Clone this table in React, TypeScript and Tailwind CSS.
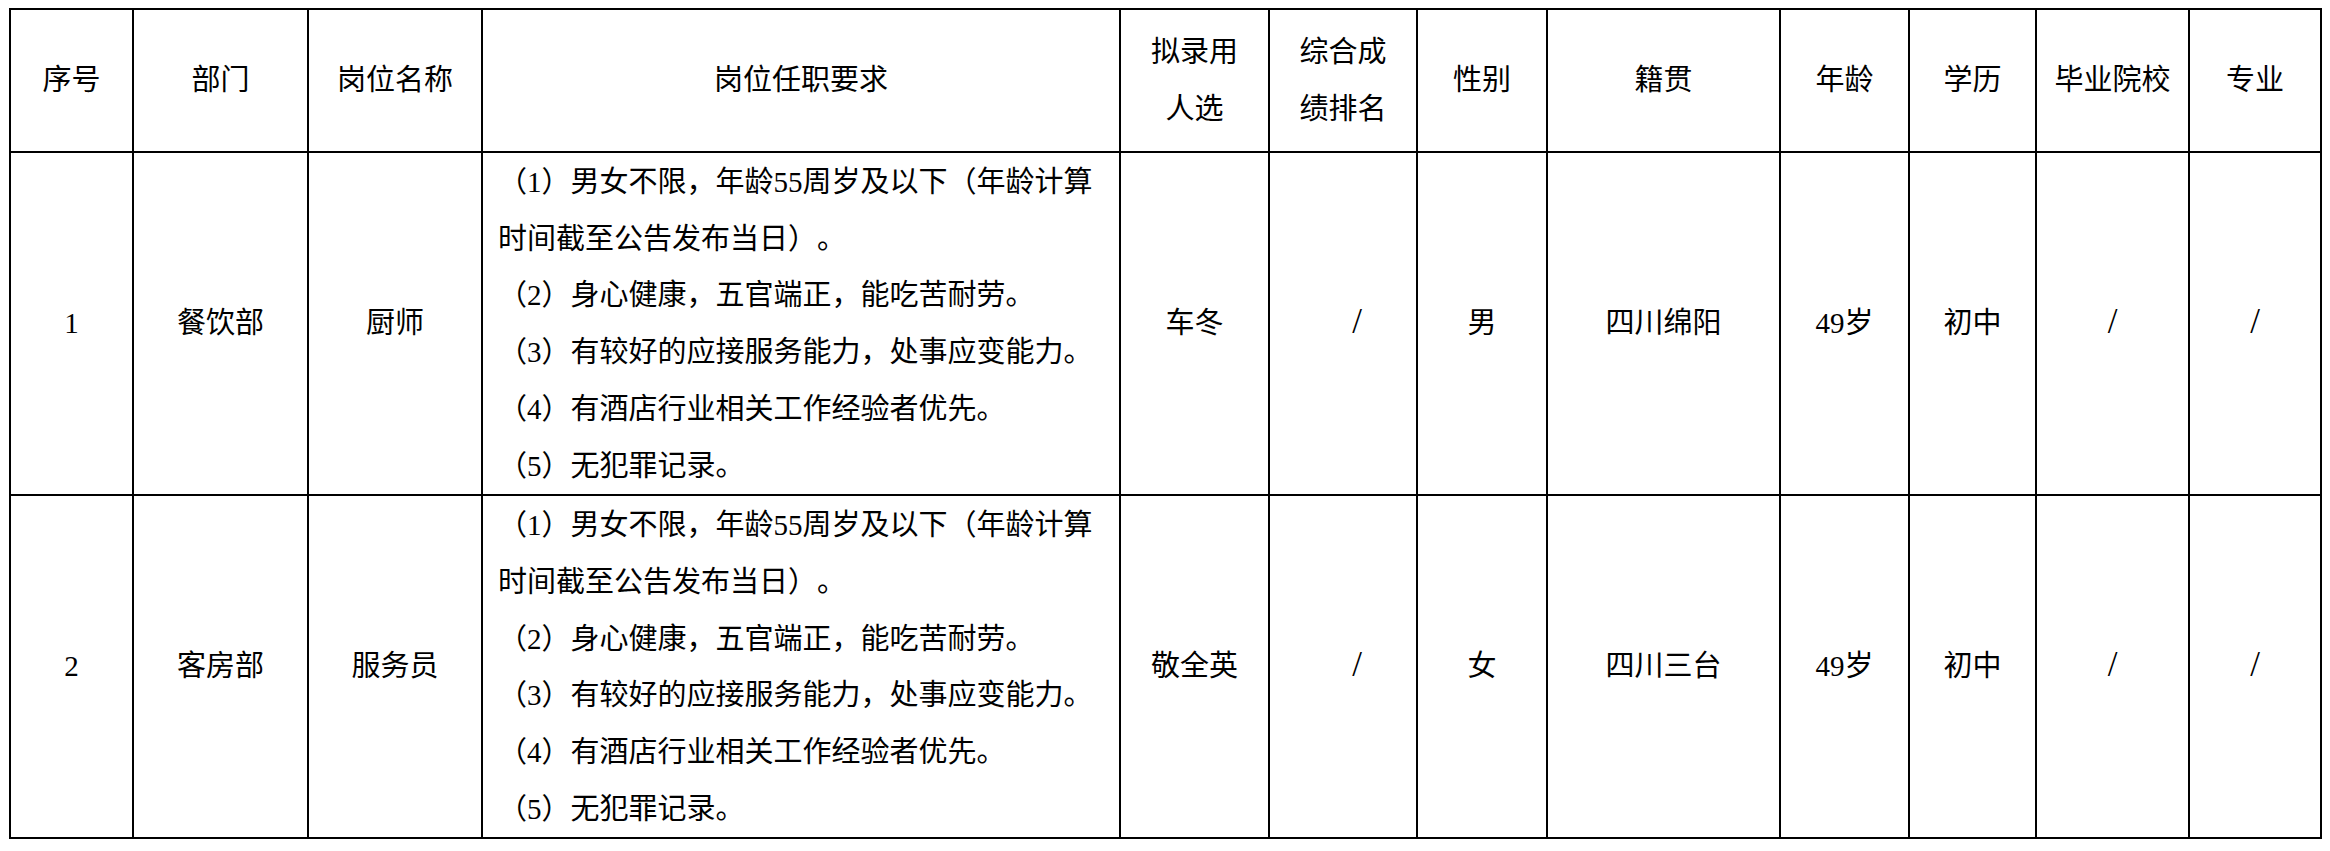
const FONT = "font-['Liberation_Serif','Noto_Sans_CJK_SC',serif]";

// column widths measured between grid lines
const COLS = [123, 175, 174, 638, 149, 148, 130, 233, 129, 127, 153, 132];

const REQUIREMENTS = [
    <>（1）男女不限，年龄55周岁及以下（年龄计算<br />时间截至公告发布当日）。</>,
    <>（2）身心健康，五官端正，能吃苦耐劳。</>,
    <>（3）有较好的应接服务能力，处事应变能力。</>,
    <>（4）有酒店行业相关工作经验者优先。</>,
    <>（5）无犯罪记录。</>,
];

type Person = {
    no: string;
    dept: string;
    post: string;
    name: string;
    gender: string;
    origin: string;
    age: string;
    edu: string;
};

const ROWS: Person[] = [
    { no: "1", dept: "餐饮部", post: "厨师", name: "车冬", gender: "男", origin: "四川绵阳", age: "49岁", edu: "初中" },
    { no: "2", dept: "客房部", post: "服务员", name: "敬全英", gender: "女", origin: "四川三台", age: "49岁", edu: "初中" },
];

const cell = "border-2 border-black text-center align-middle p-0";

function HeadCell({ children }: { children: React.ReactNode }) {
    return <th className={`${cell} h-[143px] font-normal`}>{children}</th>;
}

function Slash({ className = "" }: { className?: string }) {
    return <span className={`inline-block text-[35px] leading-[40px] ${className}`}>/</span>;
}

export default function App() {
    return (
        <div
            className={`min-h-screen bg-white pl-[9px] pt-[8px] text-black text-[29px] leading-[56.7px] [text-spacing-trim:space-all] ${FONT}`}
        >
            <table className="table-fixed border-collapse w-[2313px]">
                <colgroup>
                    {COLS.map((w, i) => (
                        <col key={i} style={{ width: w }} />
                    ))}
                </colgroup>
                <thead>
                    <tr>
                        <HeadCell>序号</HeadCell>
                        <HeadCell>部门</HeadCell>
                        <HeadCell>岗位名称</HeadCell>
                        <HeadCell>岗位任职要求</HeadCell>
                        <HeadCell>
                            拟录用
                            <br />
                            人选
                        </HeadCell>
                        <HeadCell>
                            综合成
                            <br />
                            绩排名
                        </HeadCell>
                        <HeadCell>性别</HeadCell>
                        <HeadCell>籍贯</HeadCell>
                        <HeadCell>年龄</HeadCell>
                        <HeadCell>学历</HeadCell>
                        <HeadCell>毕业院校</HeadCell>
                        <HeadCell>专业</HeadCell>
                    </tr>
                </thead>
                <tbody>
                    {ROWS.map((r) => (
                        <tr key={r.no}>
                            <td className={cell}>{r.no}</td>
                            <td className={cell}>{r.dept}</td>
                            <td className={cell}>{r.post}</td>
                            <td className={`${cell} text-left pl-[15px] pt-px`}>
                                {REQUIREMENTS.map((line, i) => (
                                    <div key={i} className="whitespace-nowrap">
                                        {line}
                                    </div>
                                ))}
                            </td>
                            <td className={cell}>{r.name}</td>
                            <td className={cell}>
                                <Slash className="ml-[28px]" />
                            </td>
                            <td className={cell}>{r.gender}</td>
                            <td className={cell}>{r.origin}</td>
                            <td className={cell}>{r.age}</td>
                            <td className={cell}>{r.edu}</td>
                            <td className={cell}>
                                <Slash />
                            </td>
                            <td className={cell}>
                                <Slash />
                            </td>
                        </tr>
                    ))}
                </tbody>
            </table>
        </div>
    );
}
